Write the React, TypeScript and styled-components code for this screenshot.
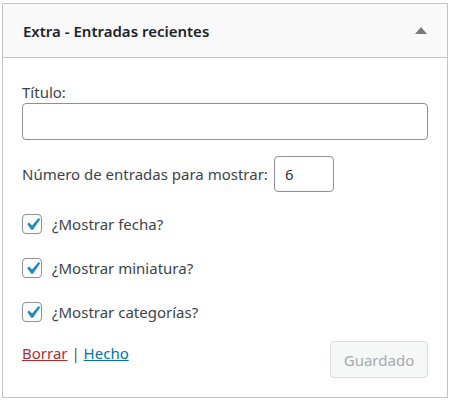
import React from "react";
import styled, { createGlobalStyle } from "styled-components";

const Global = createGlobalStyle`
  html, body { margin: 0; padding: 0; background: #fff; }
  body { font-family: "Noto Sans", "Open Sans", sans-serif; color: #3c434a; }
  * { box-sizing: border-box; }
`;

const Page = styled.div`
  padding: 3px 2px 0 2px;
  width: 450px;
`;

const Widget = styled.div`
  border: 1px solid #c3c4c7;
  background: #fff;
  width: 446px;
`;

const Header = styled.div`
  height: 54px;
  background: #f9f9f9;
  border-bottom: 1px solid #c3c4c7;
  display: flex;
  align-items: center;
  justify-content: space-between;
  padding: 0 20px 0 20px;
`;

const Title = styled.h3`
  margin: 0;
  font-size: 15px;
  font-weight: 600;
  color: #1d2327;
`;

const Arrow = styled.span`
  width: 0;
  height: 0;
  border-left: 6px solid transparent;
  border-right: 6px solid transparent;
  border-bottom: 7px solid #787c82;
`;

const Body = styled.div`
  padding: 24px 19px 19px 19px;
  display: flex;
  flex-direction: column;
`;

const Label = styled.label`
  font-size: 15px;
  line-height: 20px;
  display: block;
`;

const TextInput = styled.input`
  display: block;
  width: 406px;
  height: 37px;
  margin-top: 1px;
  border: 1px solid #8c8f94;
  border-radius: 4px;
  font-size: 15px;
  padding: 0 8px;
  font-family: inherit;
`;

const NumberRow = styled.div`
  display: flex;
  align-items: center;
  gap: 6px;
  margin-top: 16px;
  font-size: 15px;
`;

const NumberInput = styled.input`
  width: 60px;
  height: 36px;
  border: 1px solid #8c8f94;
  border-radius: 4px;
  font-size: 15px;
  padding: 0 10px;
  font-family: inherit;
  color: #2c3338;
`;

const CheckList = styled.div`
  display: flex;
  flex-direction: column;
  gap: 24px;
  margin-top: 22px;
`;

const CheckRow = styled.label`
  display: flex;
  align-items: center;
  gap: 10px;
  font-size: 15px;
  line-height: 20px;
`;

const Box = styled.span`
  position: relative;
  width: 20px;
  height: 20px;
  border: 1px solid #8c8f94;
  border-radius: 4px;
  background: #fff;
  flex: none;

  svg {
    position: absolute;
    left: -3px;
    top: -3px;
  }
`;

const Footer = styled.div`
  display: flex;
  justify-content: space-between;
  align-items: flex-start;
  margin-top: 19px;
`;

const Links = styled.div`
  font-size: 15px;
  color: #50575e;
  padding-top: 2px;
`;

const Link = styled.a<{ $tone: "red" | "blue" }>`
  color: ${(p) => (p.$tone === "red" ? "#b32d2e" : "#0073aa")};
  text-decoration: underline;
`;

const Button = styled.button`
  width: 98px;
  height: 37px;
  background: #f6f7f7;
  border: 1px solid #dcdcde;
  border-radius: 4px;
  color: #a7aaad;
  font-size: 15px;
  font-family: inherit;
`;

const Check = () => (
  <Box>
    <svg width="25" height="25" viewBox="0 0 20 20">
      <path d="M14.83 4.89l1.34.94-5.81 8.38H9.02L5.78 9.67l1.34-1.25 2.57 2.4z" fill="#1e8cbe" />
    </svg>
  </Box>
);

export default function App() {
  return (
    <>
      <Global />
      <Page>
        <Widget>
          <Header>
            <Title>Extra - Entradas recientes</Title>
            <Arrow />
          </Header>
          <Body>
            <Label>Título:</Label>
            <TextInput type="text" />
            <NumberRow>
              <span>Número de entradas para mostrar:</span>
              <NumberInput type="text" defaultValue="6" />
            </NumberRow>
            <CheckList>
              <CheckRow><Check />¿Mostrar fecha?</CheckRow>
              <CheckRow><Check />¿Mostrar miniatura?</CheckRow>
              <CheckRow><Check />¿Mostrar categorías?</CheckRow>
            </CheckList>
            <Footer>
              <Links>
                <Link $tone="red" href="#">Borrar</Link> | <Link $tone="blue" href="#">Hecho</Link>
              </Links>
              <Button disabled>Guardado</Button>
            </Footer>
          </Body>
        </Widget>
      </Page>
    </>
  );
}
